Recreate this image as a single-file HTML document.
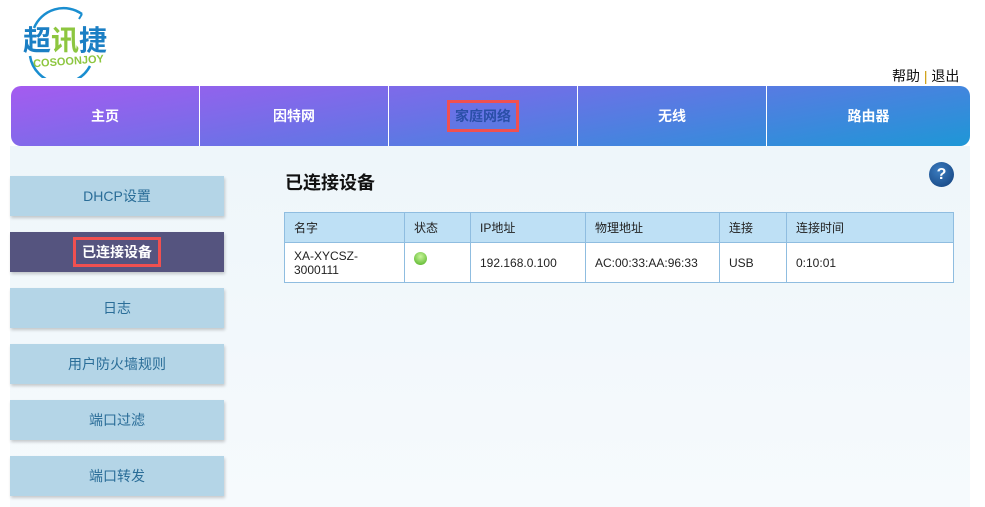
<!DOCTYPE html>
<html><head><meta charset="utf-8"><style>
*{margin:0;padding:0;box-sizing:border-box}
body{width:985px;height:507px;background:#fff;font-family:"Liberation Sans","Noto Sans CJK SC",sans-serif;position:relative;overflow:hidden}
.abs{position:absolute}
.nav{left:11px;top:86px;width:959px;height:60px;border-radius:10px;background:linear-gradient(170deg,#a55bf0 0%,#6a72e6 45%,#1e97d6 100%);display:flex;overflow:hidden}
.nav div{width:189px;color:#fff;font-size:14px;font-weight:bold;display:flex;align-items:center;justify-content:center;border-left:1px solid #fff}
.nav div:first-child{border-left:none;width:188px}
.nav div:last-child{width:204px}
.main{left:10px;top:146px;width:960px;height:361px;background:linear-gradient(180deg,#eef6fa,#f6fafd)}
.btn{left:10px;width:214px;height:40px;background:#b4d5e7;color:#2a6d98;font-size:14px;display:flex;align-items:center;justify-content:center;box-shadow:1px 2px 3px rgba(0,0,0,.2)}
table{position:absolute;left:284px;top:212px;width:670px;border-collapse:collapse;font-size:12px;color:#222}
td,th{border:1px solid #8fbde0;text-align:left;padding:0 9px;font-weight:normal}
th{background:#bee0f5;height:30px}
td{background:#fff;height:40px;line-height:14px}
</style></head><body>
<svg class="abs" style="left:20px;top:6px" width="90" height="72" viewBox="0 0 90 72">
<path d="M14 22 A32 32 0 0 1 62 8" stroke="#1a8ed0" stroke-width="2.5" fill="none"/>
<path d="M62 8 l-6 -3 M62 8 l-3 5" stroke="#1a8ed0" stroke-width="2" fill="none"/>
<path d="M10 50 A32 32 0 0 0 70 60" stroke="#1a8ed0" stroke-width="2.5" fill="none"/>
<text x="3" y="44" font-size="28" font-weight="bold" fill="#1b7fc4" font-family="Noto Sans CJK SC,sans-serif">超<tspan fill="#8dc63f">讯</tspan>捷</text>
<text x="13" y="59" font-size="11" font-weight="bold" fill="#8dc63f" font-family="Liberation Sans,sans-serif" transform="rotate(-4 45 55)">COSOONJOY</text>
</svg>
<div class="abs" style="left:892px;top:66px;font-size:14px;color:#111">帮助 <span style="color:#c90">|</span> 退出</div>
<div class="abs nav"><div>主页</div><div>因特网</div><div><span style="color:#2a4fa8;border:3px solid #f05050;padding:3px 5px">家庭网络</span></div><div>无线</div><div>路由器</div></div>
<div class="abs main"></div>
<div class="abs btn" style="top:176px">DHCP设置</div>
<div class="abs btn" style="top:232px;background:#55547f;color:#fff;font-weight:bold"><span style="border:3px solid #f05050;padding:2px 6px">已连接设备</span></div>
<div class="abs btn" style="top:288px">日志</div>
<div class="abs btn" style="top:344px">用户防火墙规则</div>
<div class="abs btn" style="top:400px">端口过滤</div>
<div class="abs btn" style="top:456px">端口转发</div>
<div class="abs" style="left:285px;top:169px;font-size:18px;font-weight:bold;color:#111">已连接设备</div>
<div class="abs" style="left:929px;top:162px;width:25px;height:25px;border-radius:50%;background:radial-gradient(circle at 40% 35%,#3a7cc0,#123f7a);color:#fff;font-weight:bold;font-size:16px;text-align:center;line-height:25px">?</div>
<table>
<tr><th style="width:120px">名字</th><th style="width:66px">状态</th><th style="width:115px">IP地址</th><th style="width:134px">物理地址</th><th style="width:67px">连接</th><th>连接时间</th></tr>
<tr><td>XA-XYCSZ-<br>3000111</td><td><div style="width:13px;height:13px;border-radius:50%;background:radial-gradient(circle at 50% 35%,#c8f59a,#4cae1e);margin-top:-8px"></div></td><td>192.168.0.100</td><td>AC:00:33:AA:96:33</td><td>USB</td><td>0:10:01</td></tr>
</table>
</body></html>
